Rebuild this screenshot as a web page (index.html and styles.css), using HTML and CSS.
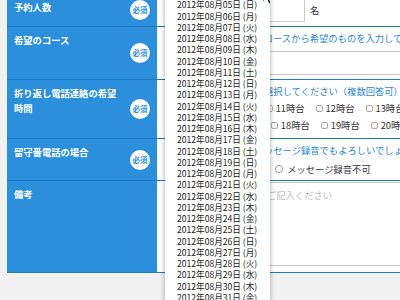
FILE: index.html
```html
<!DOCTYPE html>
<html lang="ja">
<head>
    <meta charset="UTF-8">
    <meta name="viewport" content="width=device-width, initial-scale=1.0">
    <title>ご予約フォーム</title>
    <link rel="stylesheet" href="styles.css">
</head>
<body>
    <div class="page">
        <form class="reserve">
            <div class="row">
                <div class="label"><span class="label-text">予約人数</span><span class="required">必須</span></div>
                <div class="field field-count">
                    <input type="text" class="input-count">
                    <span class="unit">名</span>
                </div>
            </div>
            <div class="row">
                <div class="label"><span class="label-text">希望のコース</span><span class="required">必須</span></div>
                <div class="field">
                    <p class="note">ご案内している下記のコースから希望のものを入力してください</p>
                    <input type="text" class="input-wide">
                </div>
            </div>
            <div class="row">
                <div class="label"><span class="label-text">折り返し電話連絡の希望時間</span><span class="required">必須</span></div>
                <div class="field">
                    <p class="note note-tight">希望する時間帯を全て選択してください（複数回答可）</p>
                    <div class="check-line">
                        <label class="check"><input type="checkbox">9時台</label>
                        <label class="check"><input type="checkbox">10時台</label>
                        <label class="check"><input type="checkbox">11時台</label>
                        <label class="check"><input type="checkbox">12時台</label>
                        <label class="check"><input type="checkbox">13時台</label>
                        <label class="check"><input type="checkbox">14時台</label>
                        <label class="check"><input type="checkbox">15時台</label>
                    </div>
                    <div class="check-line">
                        <label class="check"><input type="checkbox">16時台</label>
                        <label class="check"><input type="checkbox">17時台</label>
                        <label class="check"><input type="checkbox">18時台</label>
                        <label class="check"><input type="checkbox">19時台</label>
                        <label class="check"><input type="checkbox">20時台</label>
                        <label class="check"><input type="checkbox">21時台</label>
                    </div>
                </div>
            </div>
            <div class="row">
                <div class="label"><span class="label-text">留守番電話の場合</span><span class="required">必須</span></div>
                <div class="field field-radio">
                    <p class="note note-radio">ご不在時、留守電にメッセージ録音でもよろしいでしょうか</p>
                    <div class="radio-line">
                        <label class="radio"><input type="radio" name="rec">メッセージ録音可</label>
                        <label class="radio"><input type="radio" name="rec">メッセージ録音不可</label>
                    </div>
                </div>
            </div>
            <div class="row">
                <div class="label"><span class="label-text">備考</span></div>
                <div class="field field-memo">
                    <textarea class="memo" placeholder="その他ご要望があればご記入ください"></textarea>
                </div>
            </div>
        </form>

        <div class="date-menu">
            <div class="date-item">2012年08月04日 (土)</div>
            <div class="date-item">2012年08月05日 (日)</div>
            <div class="date-item">2012年08月06日 (月)</div>
            <div class="date-item">2012年08月07日 (火)</div>
            <div class="date-item">2012年08月08日 (水)</div>
            <div class="date-item">2012年08月09日 (木)</div>
            <div class="date-item">2012年08月10日 (金)</div>
            <div class="date-item">2012年08月11日 (土)</div>
            <div class="date-item">2012年08月12日 (日)</div>
            <div class="date-item">2012年08月13日 (月)</div>
            <div class="date-item">2012年08月14日 (火)</div>
            <div class="date-item">2012年08月15日 (水)</div>
            <div class="date-item">2012年08月16日 (木)</div>
            <div class="date-item">2012年08月17日 (金)</div>
            <div class="date-item">2012年08月18日 (土)</div>
            <div class="date-item">2012年08月19日 (日)</div>
            <div class="date-item">2012年08月20日 (月)</div>
            <div class="date-item">2012年08月21日 (火)</div>
            <div class="date-item">2012年08月22日 (水)</div>
            <div class="date-item">2012年08月23日 (木)</div>
            <div class="date-item">2012年08月24日 (金)</div>
            <div class="date-item">2012年08月25日 (土)</div>
            <div class="date-item">2012年08月26日 (日)</div>
            <div class="date-item">2012年08月27日 (月)</div>
            <div class="date-item">2012年08月28日 (火)</div>
            <div class="date-item">2012年08月29日 (水)</div>
            <div class="date-item">2012年08月30日 (木)</div>
            <div class="date-item">2012年08月31日 (金)</div>
            <div class="date-item">2012年09月01日 (土)</div>
        </div>

        <svg class="cursor" width="12" height="18" viewBox="0 0 12 18">
            <path d="M1 1 L1 14 L4.5 10.5 L7 16 L9 15 L6.5 9.5 L11 9.5 Z" fill="#000" stroke="#fff" stroke-width="1"/>
        </svg>
    </div>
</body>
</html>
```

FILE: styles.css
```css
html, body {
    margin: 0;
    height: 100%;
    overflow: hidden;
}

body {
    font-family: 'Noto Sans CJK JP', sans-serif;
    background: #f1f1f1;
    color: #333;
}

.page {
    position: relative;
    padding: 1px 0 0 7px;
}

.reserve {
    width: 760px;
    margin: -7px 0 0;
}

.row {
    display: flex;
    border-bottom: 1px solid #1e79c3;
}

.label {
    width: 150px;
    box-sizing: border-box;
    padding: 6px 7px;
    display: flex;
    justify-content: space-between;
    background: #2b8fdb;
    color: #fff;
    font-weight: bold;
    font-size: 9.3px;
    line-height: 15px;
}

.label-text {
    width: 106px;
    align-self: flex-start;
}

.required {
    align-self: center;
    width: 20px;
    height: 20px;
    border-radius: 50%;
    background: #fff;
    color: #2b8fdb;
    font-size: 7.5px;
    line-height: 20px;
    text-align: center;
}

.field {
    flex: 1;
    background: #fff;
    padding: 4px 0 4px 14px;
    font-size: 9.3px;
    line-height: 15px;
    color: #333;
}

.field-count {
    display: flex;
    align-items: center;
}

.input-count {
    width: 134px;
    height: 23px;
    box-sizing: border-box;
    margin: 0;
    border: 1px solid #c8c8c8;
}

.unit {
    margin-left: 5px;
}

.note {
    margin: 0 0 5px;
    color: #2a86d3;
    white-space: nowrap;
}

.note-tight {
    margin-bottom: 1px;
}

.note-radio {
    margin-bottom: 3px;
}

.input-wide {
    display: block;
    width: 420px;
    height: 24px;
    box-sizing: border-box;
    margin: 0;
    border: 1px solid #c8c8c8;
}

.check-line {
    display: flex;
    line-height: 17px;
    white-space: nowrap;
}

.check {
    display: flex;
    align-items: center;
    margin-right: 11px;
}

.check input {
    -webkit-appearance: none;
    appearance: none;
    width: 7px;
    height: 7px;
    margin: 0 3px 0 0;
    border: 1px solid #aaa;
    border-radius: 2px;
    background: #fafafa;
}

.field-radio {
    padding-bottom: 3px;
}

.radio-line {
    display: flex;
    line-height: 16px;
    white-space: nowrap;
}

.radio {
    display: flex;
    align-items: center;
    margin-right: 18px;
}

.radio input {
    -webkit-appearance: none;
    appearance: none;
    width: 8px;
    height: 8px;
    margin: 0 4px 0 0;
    border: 1px solid #999;
    border-radius: 50%;
    background: #fff;
}

.field-memo {
    padding: 1px 0 6px 14px;
}

.memo {
    display: block;
    width: 420px;
    height: 84px;
    box-sizing: border-box;
    margin: 0;
    padding: 5px 2px;
    border: 1px solid #c8c8c8;
    font-family: inherit;
    font-size: inherit;
    line-height: 15px;
    resize: none;
}

.memo::placeholder {
    color: #bdbdbd;
}

.date-menu {
    position: absolute;
    left: 165px;
    top: -12px;
    width: 105px;
    background: #fff;
    box-shadow: 0 0 5px rgba(0, 0, 0, 0.35);
}

.date-item {
    padding-left: 12px;
    font-size: 8.6px;
    line-height: 11.25px;
    color: #222;
    white-space: nowrap;
}

.cursor {
    position: absolute;
    left: 262px;
    top: -12px;
}
```
